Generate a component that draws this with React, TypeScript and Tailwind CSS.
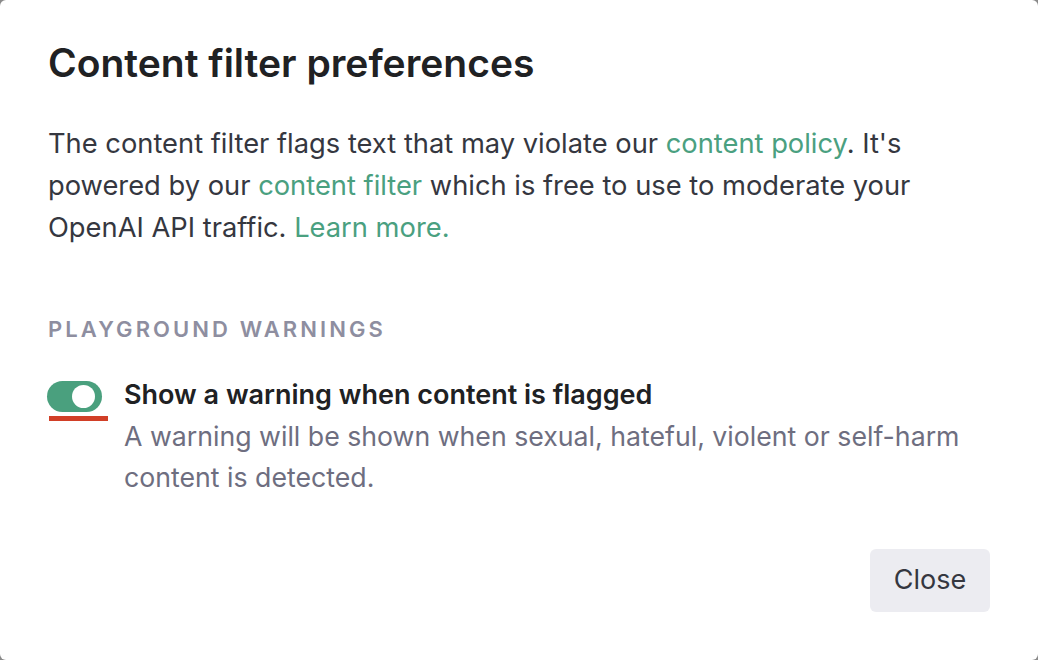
export default function App() {
  return (
    <div className="h-[660px] w-[1038px] bg-[#8a8a8a]">
      <div
        className="flex h-full w-full flex-col rounded-[6px] bg-white pl-12 pr-12 pt-[39px]"
        style={{ fontFamily: "Inter, 'Noto Sans', sans-serif" }}
      >
        <h1 className="text-[39px] font-semibold leading-[48px] text-[#202123]">
          Content filter preferences
        </h1>

        <p className="mt-[36px] text-[27.3px] leading-[42px] text-[#353740]">
          The content filter flags text that may violate our{" "}
          <a className="text-[#4aa080]">content policy</a>. It's powered by our{" "}
          <a className="text-[#4aa080]">content filter</a> which is free to use to moderate your OpenAI
          API traffic. <a className="text-[#4aa080]">Learn more.</a>
        </p>

        <div className="mt-[66px] text-[22px] font-semibold uppercase leading-[28px] tracking-[0.14em] text-[#8e8ea0]">
          Playground warnings
        </div>

        <div className="mt-[31px] flex gap-[22px]">
          <div className="relative -ml-px mt-[7px] h-[31px] w-[55px] shrink-0">
            <div className="flex h-[31px] w-[55px] items-center justify-end rounded-full bg-[#4aa07e] pr-[7px]">
              <div className="h-[23px] w-[23px] rounded-full bg-white" />
            </div>
            <div className="absolute left-[2px] top-[35px] h-[5px] w-[59px] bg-[#d13f27]" />
          </div>
          <div>
            <div className="text-[27px] font-semibold leading-[42px] text-[#202123]">
              Show a warning when content is flagged
            </div>
            <div className="text-[26.7px] leading-[41px] text-[#6e6e80]">
              A warning will be shown when sexual, hateful, violent or self-harm content is detected.
            </div>
          </div>
        </div>

        <div className="mt-auto flex justify-end pb-[48px]">
          <button className="h-[63px] w-[120px] rounded-[6px] bg-[#ececf1] text-[27px] text-[#353740]">
            Close
          </button>
        </div>
      </div>
    </div>
  );
}
